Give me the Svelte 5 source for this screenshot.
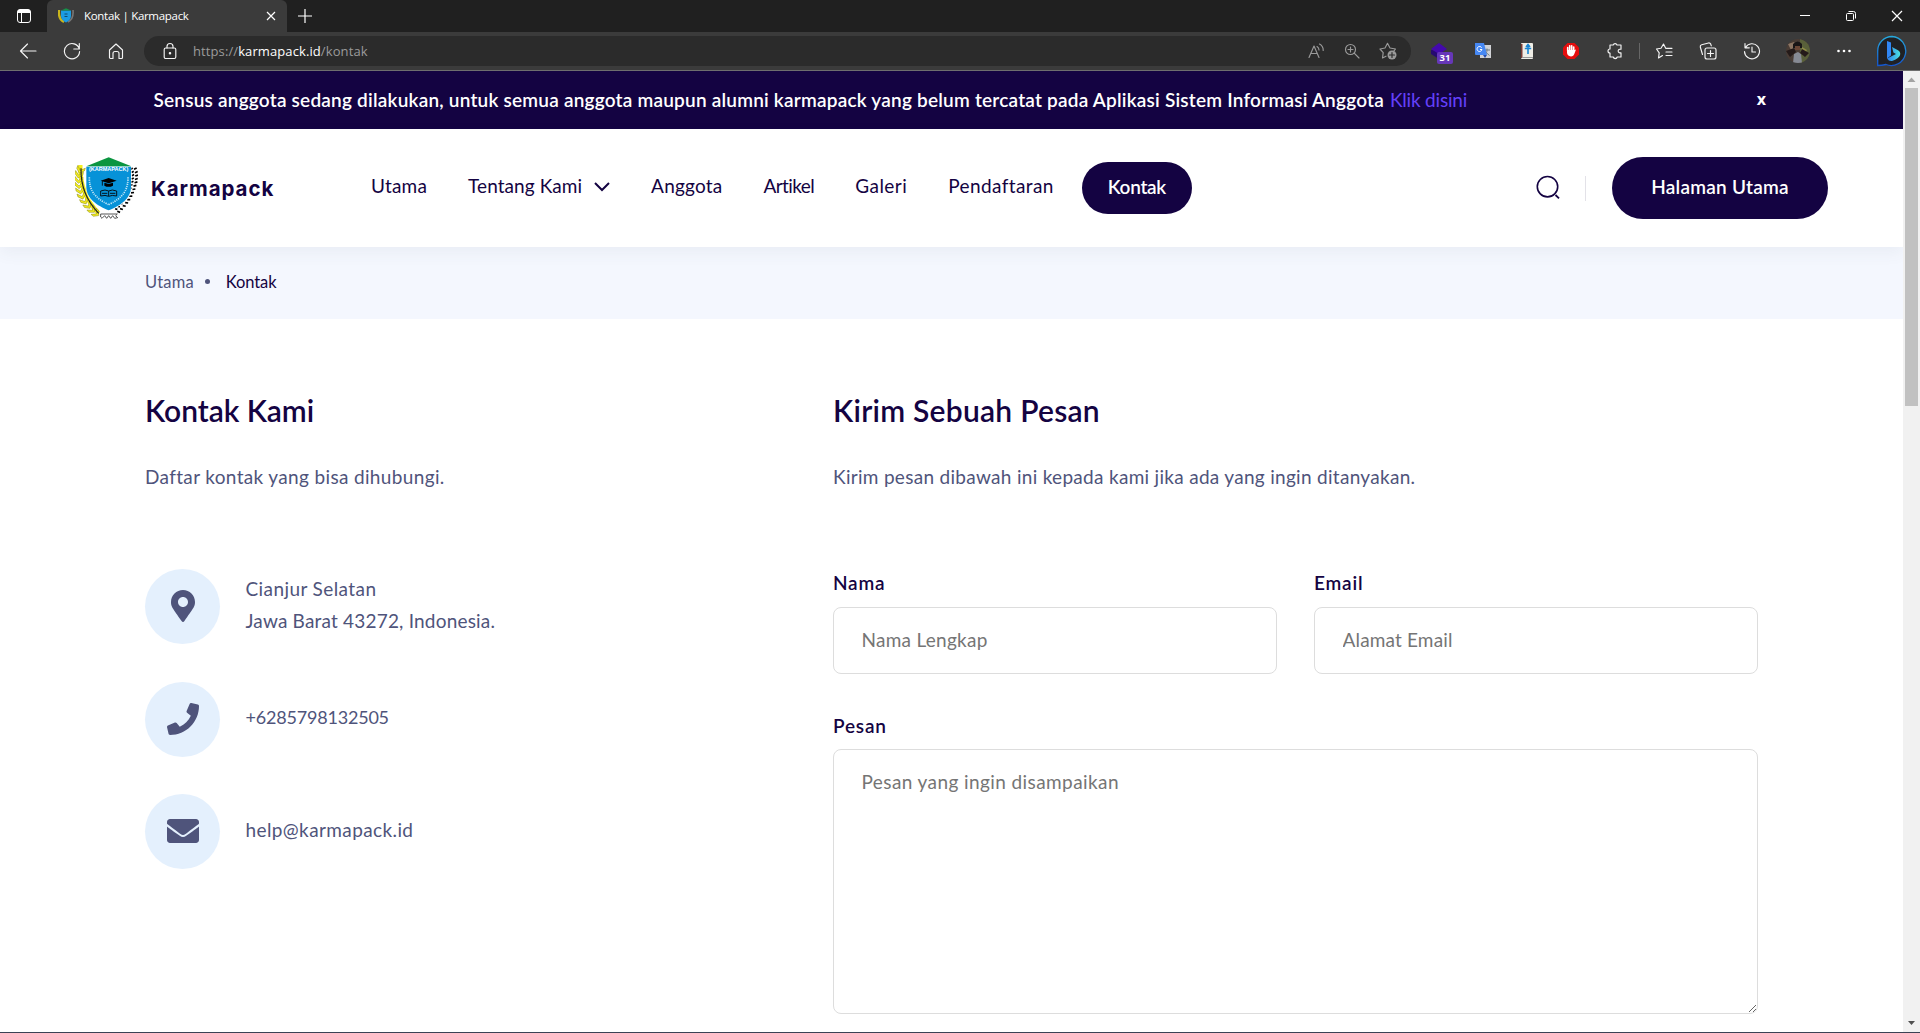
<script>
  const nav = [
    { label: 'Utama', ls: 0.2 },
    { label: 'Tentang Kami', ls: 0.07, menu: true },
    { label: 'Anggota', ls: 0.2 },
    { label: 'Artikel', ls: -0.55 },
    { label: 'Galeri', ls: 0.45 },
    { label: 'Pendaftaran', ls: 0.4 }
  ];
  const leftWheat = [
    [38, 58, 20], [33, 72, 12], [32, 88, 5], [33, 104, -2], [36, 120, -10], [41, 136, -18], [49, 151, -26], [59, 165, -34], [71, 178, -42], [83, 189, -50]
  ];
  const rightDots = [
    [196, 56, 0], [199, 66, 4], [200, 76, 6], [199, 86, 8], [198, 96, 10], [195, 106, 13], [192, 116, 16], [188, 126, 20], [183, 136, 25], [177, 146, 29], [171, 155, 34], [164, 164, 38], [156, 173, 43], [148, 181, 48]
  ];
</script>

<div class="window">
  <div class="titlebar">
    <div class="tab-actions">
      <svg width="16" height="16" viewBox="0 0 16 16"><rect x="1.5" y="1.5" width="13" height="13" rx="2.5" fill="none" stroke="#fff" /><path d="M1.5 5V4a2.5 2.5 0 0 1 2.500-2.500h8A2.500 2.500 0 0 1 14.500 4v1z" fill="#fff" /><path d="M5.500 5v9.500" stroke="#fff" /></svg>
    </div>
    <div class="tab">
      <svg class="favicon" width="16" height="16" viewBox="0 0 16 16"><path d="M1 2c-.5 5 1 10 5 12" fill="none" stroke="#c9b51c" stroke-width="2.400" /><path d="M15 2c.5 5-1 10-5 12" fill="none" stroke="#777" stroke-width="1.600" /><path d="M3 2.500h10V8c0 3-2 5-5 6.500C5 13 3 11 3 8z" fill="#1b9ce3" /><path d="M3 2.500 8 .2l5 2.300z" fill="#16924a" /><path d="M6.500 6h3M6.500 8.500h3" stroke="#124a6e" stroke-width="1.200" /></svg>
      <span class="tab-title">Kontak | Karmapack</span>
      <svg width="10" height="10" viewBox="0 0 10 10"><path d="M1 1l8 8M9 1 1 9" stroke="#fff" stroke-width="1.200" /></svg>
    </div>
    <svg class="plus" width="14" height="14" viewBox="0 0 14 14"><path d="M7 0v14M0 7h14" stroke="#fff" stroke-width="1.200" /></svg>
    <div class="controls">
      <span><svg width="10" height="10" viewBox="0 0 10 10"><path d="M0 5.500h10" stroke="#fff" /></svg></span>
      <span><svg width="12" height="12" viewBox="0 0 12 12" fill="none" stroke="#fff"><rect x="1.500" y="3.500" width="7" height="7" rx="1" /><path d="M3.500 1.500h5a2 2 0 0 1 2 2v5" /></svg></span>
      <span><svg width="12" height="12" viewBox="0 0 12 12"><path d="M1 1l10 10M11 1 1 11" stroke="#fff" stroke-width="1.200" /></svg></span>
    </div>
  </div>

  <div class="toolbar">
    <span class="cell"><svg width="18" height="18" viewBox="0 0 18 18" class="line"><path d="M17 9H1.500M8.500 2 1.500 9l7 7" /></svg></span>
    <span class="cell"><svg width="18" height="18" viewBox="0 0 18 18" class="line"><path d="M16.300 7A7.600 7.600 0 1 0 16.600 9.500M16.300 1.500V7h-5.500" /></svg></span>
    <span class="cell"><svg width="16" height="18" viewBox="0 0 16 18" class="line"><path d="M1.500 8 8 2l6.500 6v7.500a1 1 0 0 1-1 1h-2.500v-5a2 2 0 0 0-2-2H7a2 2 0 0 0-2 2v5H2.500a1 1 0 0 1-1-1z" /></svg></span>
    <div class="address">
      <svg width="14" height="18" viewBox="0 0 14 18" class="line"><rect x="1.200" y="6" width="11.600" height="10.500" rx="1.500" /><path d="M4 6V4.500a3 3 0 0 1 6 0V6" /><circle cx="7" cy="11.200" r=".7" fill="#fff" /></svg>
      <span class="url">https://<b>karmapack.id</b>/kontak</span>
      <span class="icon36"><svg width="17" height="16" viewBox="0 0 17 16" class="line dim"><path d="M1 14.500 6 3l5 11.500M2.700 10.500h6.500M9 3.500a4 4 0 0 1 2 3.500M11.500 1a7 7 0 0 1 3.700 6.500" /></svg></span>
      <span class="icon36"><svg width="16" height="16" viewBox="0 0 16 16" class="line dim"><circle cx="6.500" cy="6.500" r="5" /><path d="M10.200 10.200 15 15M4 6.500h5M6.500 4v5" /></svg></span>
      <span class="icon36"><svg width="18" height="18" viewBox="0 0 18 18" class="line dim"><path d="M7 14.200 3.500 16l.7-5.300L1 7l5-1 2.500-4.700L11 6l5.500 1-1.500 1.800" /><circle cx="13" cy="13" r="4.500" fill="#9a9a9a" stroke="none" /><path d="M13 10.500v5M10.500 13h5" stroke="#2b2b2b" /></svg></span>
    </div>
    <span class="cell stack">
      <svg width="18" height="18" viewBox="0 0 18 18"><path d="M1 8v4l8 5 4-3V9z" fill="#260a70" /><path d="M1 7 9 1l8 6-8 5z" fill="#4409ad" /></svg>
      <span class="badge">31</span>
    </span>
    <span class="cell"><svg width="18" height="18" viewBox="0 0 18 18"><rect x="6" y="3" width="11" height="13" fill="#d0d2d6" /><path d="M10 8h6M13 6.500V8c0 2-1 4-3 5M11.500 10l4 3.500" stroke="#6d7c86" fill="none" /><path d="M1 1h9l3 12H2a1 1 0 0 1-1-1z" fill="#4688f4" /><path d="m9 13 4 0-2 3z" fill="#274dab" /><path d="M7.700 5.700A2.500 2.500 0 1 0 8 7.500H6" stroke="#fff" fill="none" /></svg></span>
    <span class="cell"><svg width="14" height="18" viewBox="0 0 14 18"><rect x="1" y="1" width="12" height="16" rx="1" fill="#efede6" /><path d="M1 2v14h1.500V2z" fill="#7b3c35" /><path d="M2 15.500h11" stroke="#999" /><path d="M8 12V4M4.800 6.500h6.400M6 5l2-2.500L10 5" stroke="#1684d4" stroke-width="1.600" fill="none" /></svg></span>
    <span class="cell"><svg width="18" height="18" viewBox="0 0 18 18"><path d="M5.500 1h7L17 5.500v7L12.500 17h-7L1 12.500v-7z" fill="#e40d0d" /><path d="M5.700 9V5.500M7.700 8V3.800M9.700 8V3.800M11.700 9V5" stroke="#fff" stroke-width="1.600" stroke-linecap="round" /><path d="M5 8h7.500l1.500-.6-1.500 4c-.6 2-1.800 3-3.500 3C6.500 14.400 5 12.500 5 10.500z" fill="#fff" /></svg></span>
    <span class="cell"><svg width="18" height="18" viewBox="0 0 18 18" class="line"><path d="M4 3h3.200a2 2 0 0 1 3.800 0h4v4.200h-1.400a1.900 1.900 0 0 0 0 3.700H15V15h-3.800a2 2 0 0 1-3.900 0H4v-4a2 2 0 0 1 0-4z" /></svg></span>
    <span class="sep"></span>
    <span class="cell"><svg width="18" height="18" viewBox="0 0 18 18" class="line"><path d="M7.500 13.500 3.500 16l.7-5.200L1.500 7l4.500-.7L8.500 2l2.200 4.300H17M11 10h6M11 13.500h6" /></svg></span>
    <span class="cell"><svg width="18" height="18" viewBox="0 0 18 18" class="line"><rect x="6" y="6" width="11" height="11" rx="2" /><path d="M11.500 8.500v6M8.500 11.500h6M3.500 12.500 1.300 5A2 2 0 0 1 2.700 2.700L9.500 1a2 2 0 0 1 2.400 1.500l.4 1.300" /></svg></span>
    <span class="cell"><svg width="18" height="18" viewBox="0 0 18 18" class="line"><path d="M2.500 5.500A7.500 7.500 0 1 1 1.500 9.500M2 1.500v4.300h4.300M9 5v5h3.500" /></svg></span>
    <span class="cell wide"><svg width="24" height="24" viewBox="0 0 24 24"><clipPath id="av"><circle cx="12" cy="12" r="12" /></clipPath><g clip-path="url(#av)"><path d="M0 0h24v24H0z" fill="#493c35" /><path d="M14 0h10v24H14z" fill="#59603a" /><path d="M2 5l6-2 3 5-6 3z" fill="#8c7563" /><path d="M16 8l5 3-3 6-3-4z" fill="#8e8c47" /><path d="M7 5q5-5 9 0v4H7z" fill="#191516" /><path d="M9 7h5v4H9z" fill="#6a4636" /><path d="M7 24l1-9 4-2 3 2 1 9z" fill="#868a94" /><path d="M0 12l8-3 2 4-6 5zM23 14l-7-4-2 4 5 4z" fill="#241a19" /></g></svg></span>
    <span class="cell"><svg width="16" height="4" viewBox="0 0 16 4" fill="#fff"><circle cx="2.500" cy="2" r="1.300" /><circle cx="8" cy="2" r="1.300" /><circle cx="13.500" cy="2" r="1.300" /></svg></span>
    <span class="cell bing"><svg width="32" height="32" viewBox="0 0 32 32"><defs><linearGradient id="bg" x1="0" y1="0" x2="0" y2="1"><stop offset="0" stop-color="#26a8dc" /><stop offset="1" stop-color="#1456cf" /></linearGradient><linearGradient id="bb" x1="0" y1="0" x2="1" y2="0"><stop offset="0" stop-color="#2d7df0" /><stop offset="1" stop-color="#4be3e0" /></linearGradient></defs><path d="M16 1.500A14.500 14.500 0 1 1 10 29.500Q6 30.500 1.700 30.500V16A14.500 14.500 0 0 1 16 1.500z" fill="#202124" stroke="url(#bg)" stroke-width="1.300" /><path d="m11 6 4 1.500v13L11 23.500z" fill="#3087f5" /><path d="M16 12l6 3.200q3 1.800 2 5Q23 23.500 16 26q-3 .5-5-2.500l9-4.500-2.600-1.500z" fill="url(#bb)" /></svg></span>
  </div>

  <div class="viewport">
    <div class="page">
      <div class="banner">
        <p>Sensus anggota sedang dilakukan, untuk semua anggota maupun alumni karmapack yang belum tercatat pada Aplikasi Sistem Informasi Anggota</p>
        <a href="#sensus">Klik disini</a>
        <span class="dismiss">x</span>
      </div>

      <header>
        <svg class="logo" width="63" height="62" viewBox="21 21 189 186">
          <path d="M37 45C36 85 42 140 92 190" fill="none" stroke="#f4ee1c" stroke-width="13" />
          {#each leftWheat as [x, y, r]}
            <g transform="translate({x} {y}) rotate({r})"><path d="M0 4-12-8v9L0 12 12 1v-9z" fill="#f4ee1c" stroke="#8d8b1a" stroke-width="1.500" /></g>
          {/each}
          <path d="M39 55C38 100 48 145 92 190" fill="none" stroke="#222" stroke-width="3.500" />
          {#each rightDots as [x, y, r]}
            <g transform="translate({x} {y}) rotate({r})"><path d="M-8 2-2-2M2 2l8-4" stroke="#000" stroke-width="5" /></g>
          {/each}
          <path d="M54 50h136v62c0 36-30 56-68 72-38-16-68-36-68-72z" fill="#fff" />
          <path d="M55 50h134v60c0 36-32 56-67 71-35-15-67-35-67-71z" fill="#0792d8" />
          <path d="M55 49 122 22l68 27z" fill="#0b9540" />
          <text x="122" y="64" text-anchor="middle" textLength="118" lengthAdjust="spacingAndGlyphs" class="logo-text">(KARMAPACK)</text>
          <path d="M64 82c0 36 12 60 58 82M180 82c0 36-12 60-58 82" fill="none" stroke="#c4e6f7" stroke-width="5" stroke-dasharray="3 3 4 3" />
          <path d="M98 92 122 84l24 8-24 8zM109 98v9q13 7 26 0v-9l-13 4z" /><path d="M103 93v14" stroke="#000" stroke-width="2.500" />
          <path d="M98 138v-15q14-6 24 0 10-6 24 0v15q-14-4-24 1-10-5-24-1zM122 123v15M102 130h16M126 130h16" fill="none" stroke="#03151f" stroke-width="3" />
          <path d="M98 192h50l-5 5 6 6-9 2-6-8-6 8-6-8-6 8-6-8-8 8-4-4z" fill="none" stroke="#333" stroke-width="2.500" />
        </svg>
        <span class="brand">Karmapack</span>
        <nav>
          {#each nav as item}
            <a href="#{item.label}" style:letter-spacing="{item.ls}px">{item.label}{#if item.menu}<svg width="16" height="10" viewBox="0 0 16 10"><path d="m1 1 7 7 7-7" fill="none" stroke="#140342" stroke-width="2" /></svg>{/if}</a>
          {/each}
          <a class="current" href="#kontak">Kontak</a>
        </nav>
        <svg class="search" width="24" height="24" viewBox="0 0 24 24" fill="none" stroke="#140342"><circle cx="11.500" cy="11.700" r="10.200" stroke-width="1.600" /><path d="m19.500 20 3.500 3.300" stroke-width="1.800" /></svg>
        <span class="rule"></span>
        <a class="cta" href="#utama">Halaman Utama</a>
      </header>

      <div class="crumbs"><span>Utama</span><i></i><span class="here">Kontak</span></div>

      <main>
        <section class="info">
          <h2>Kontak Kami</h2>
          <p class="lead">Daftar kontak yang bisa dihubungi.</p>
          <ul>
            <li>
              <span class="disc"><svg width="24" height="32" viewBox="0 0 384 512"><path d="M172.300 501.700C27 291 0 269.400 0 192 0 86 86 0 192 0s192 86 192 192c0 77.400-27 99-172.300 309.700-9.500 13.800-29.900 13.800-39.400 0zM192 272c44.200 0 80-35.800 80-80s-35.800-80-80-80-80 35.800-80 80 35.800 80 80 80z" /></svg></span>
              <div><span class="place">Cianjur Selatan</span><span class="city">Jawa Barat 43272, Indonesia.</span></div>
            </li>
            <li>
              <span class="disc"><svg width="32" height="32" viewBox="0 0 512 512"><path d="M493.400 24.600l-104-24c-11.300-2.600-22.900 3.300-27.500 13.900l-48 112c-4.200 9.800-1.400 21.300 6.900 28l60.600 49.600c-36 76.700-98.900 140.500-177.200 177.200l-49.600-60.600c-6.800-8.300-18.200-11.100-28-6.900l-112 48C3.900 366.500-2 378.100.6 389.400l24 104C27.100 504.200 36.700 512 48 512c256.100 0 464-207.500 464-464 0-11.200-7.700-20.900-18.600-23.400z" /></svg></span>
              <div><span class="phone">+6285798132505</span></div>
            </li>
            <li>
              <span class="disc"><svg width="32" height="32" viewBox="0 0 512 512"><path d="M502.300 190.800c3.900-3.100 9.700-.2 9.700 4.700V400c0 26.500-21.500 48-48 48H48c-26.500 0-48-21.500-48-48V195.600c0-5 5.700-7.800 9.700-4.700 22.400 17.400 52.100 39.500 154.100 113.600 21.100 15.400 56.700 47.800 92.200 47.600 35.700.3 72-32.800 92.300-47.600 102-74.100 131.600-96.300 154-113.700zM256 320c23.200.4 56.600-29.200 73.400-41.400 132.700-96.300 142.800-104.700 173.400-128.700 5.800-4.500 9.200-11.500 9.200-18.900v-19c0-26.500-21.500-48-48-48H48c-26.500 0-48 21.500-48 48v19c0 7.400 3.400 14.300 9.200 18.900 30.600 23.900 40.700 32.400 173.400 128.700 16.800 12.200 50.200 41.800 73.400 41.400z" /></svg></span>
              <div><span class="mail">help@karmapack.id</span></div>
            </li>
          </ul>
        </section>

        <section class="form">
          <h2>Kirim Sebuah Pesan</h2>
          <p class="lead">Kirim pesan dibawah ini kepada kami jika ada yang ingin ditanyakan.</p>
          <div class="fields">
            <label>Nama<input placeholder="Nama Lengkap" /></label>
            <label>Email<input class="email" placeholder="Alamat Email" /></label>
            <label class="full">Pesan<textarea placeholder="Pesan yang ingin disampaikan"></textarea></label>
          </div>
        </section>
      </main>
    </div>

    <div class="scrollbar">
      <svg width="17" height="17" viewBox="0 0 17 17"><path d="m4.500 11 4-4.500 4 4.500z" fill="#a3a3a3" /></svg>
      <span class="thumb"></span>
      <svg class="down" width="17" height="17" viewBox="0 0 17 17"><path d="m5 6 3.500 4L12 6z" fill="#505050" /></svg>
    </div>
  </div>
</div>

<style>
  :global(body) { background: #fff; overflow: hidden; }
  * { box-sizing: border-box; }
  svg { display: block; flex: none; }
  a { text-decoration: none; color: inherit; }
  p, h2, ul { margin: 0; padding: 0; }

  .window { display: flex; flex-direction: column; width: 1920px; height: 1033px; overflow: hidden; border-bottom: 1px solid #3a4254; font-family: Lato, "Liberation Sans", sans-serif; }

  .titlebar { display: flex; align-items: center; height: 32px; flex: none; background: #202020; font-family: "Open Sans", sans-serif; }
  .tab-actions { width: 47px; display: flex; justify-content: center; }
  .tab { display: flex; align-items: center; width: 240px; height: 32px; padding: 0 11px 0 11px; background: #3b3b3b; border-radius: 6px 6px 0 0; color: #fff; }
  .tab-title { flex: 1; margin-left: 10px; padding-bottom: 1px; font-size: 11.500px; letter-spacing: -.3px; white-space: nowrap; }
  .plus { margin-left: 11px; }
  .controls { display: flex; margin-left: auto; }
  .controls span { width: 46px; display: flex; justify-content: center; }

  .toolbar { display: flex; align-items: center; height: 39px; flex: none; padding: 0 0 0 6px; background: #3b3b3b; border-bottom: 1px solid #6e6e6e; font-family: "Open Sans", sans-serif; }
  .cell { width: 44px; flex: none; display: flex; justify-content: center; }
  .cell.wide { width: 48px; }
  .cell.bing { width: 52px; }
  .line { fill: none; stroke: #f4f4f4; stroke-width: 1.150; stroke-linejoin: round; stroke-linecap: round; }
  .line.dim { stroke: #9a9a9a; }
  .address { display: flex; align-items: center; width: 1267px; height: 30px; margin: 0 6px; padding: 0 5px 0 19px; border-radius: 15px; background: #2b2b2b; }
  .url { flex: 1; margin-left: 16px; font-size: 13px; letter-spacing: .1px; color: #9b9b9b; }
  .url b { font-weight: 400; color: #fff; }
  .icon36 { width: 36px; display: flex; justify-content: center; }
  .stack { position: relative; }
  .badge { position: absolute; left: 20px; top: 10px; width: 16px; height: 12px; border-radius: 2px; background: #6637b8; color: #fff; font-size: 9.500px; line-height: 12px; font-weight: 700; text-align: center; }
  .sep { width: 1px; height: 16px; margin: 0 2px; background: #666; }

  .viewport { display: flex; flex: 1; min-height: 0; }
  .page { width: 1903px; overflow: hidden; background: #fff; }

  .banner { display: flex; align-items: center; height: 58px; padding: 0 137px 2px 153.500px; background: #140342; color: #fff; font-size: 19px; white-space: nowrap; }
  .banner p { font-weight: 600; letter-spacing: .213px; }
  .banner a { margin-left: 6px; color: #6440fb; letter-spacing: -.2px; }
  .dismiss { margin-left: auto; font: 700 16px "Open Sans", sans-serif; }

  header { position: relative; display: flex; align-items: center; height: 118px; padding: 0 75px; background: #fff; color: #140342; box-shadow: 0 6px 15px rgba(64, 79, 104, .06); white-space: nowrap; }
  .logo-text { font: 700 15px "Liberation Sans", sans-serif; fill: #fff; }
  .brand { width: 220px; margin-left: 13px; padding-top: 1px; font: 700 20.500px Inter, sans-serif; letter-spacing: .95px; }
  nav { display: flex; align-items: center; gap: 41px; font-size: 19px; }
  nav a { display: flex; align-items: center; padding-bottom: 6px; }
  nav svg { margin-left: 12px; margin-top: 4px; }
  nav .current { justify-content: center; width: 110px; height: 52px; margin-left: -13px; padding-bottom: 4px; border-radius: 26px; background: #140342; color: #fff; font-weight: 600; letter-spacing: -.3px; }
  .search { margin-left: auto; margin-bottom: 2px; }
  .rule { width: 1px; height: 25px; margin: 0 26px 0 25px; background: #e3e2e8; }
  .cta { display: flex; align-items: center; justify-content: center; width: 216px; height: 62px; padding-bottom: 3px; border-radius: 31px; background: #140342; color: #fff; font-size: 19px; font-weight: 600; letter-spacing: .25px; }

  .crumbs { display: flex; align-items: center; height: 72px; padding: 0 145px 3px; background: #f4f7fe; color: #4f547b; font-size: 16.500px; letter-spacing: .2px; }
  .crumbs i { width: 5px; height: 5px; margin: 0 16px 0 11px; border-radius: 50%; background: #4f547b; }
  .crumbs .here { color: #140342; letter-spacing: -.1px; }

  main { display: grid; grid-template-columns: 688px 925px; padding: 71px 145px 0; color: #4f547b; font-size: 19px; line-height: 32px; }
  h2 { color: #140342; font-size: 30px; line-height: 41px; height: 40px; font-weight: 600; letter-spacing: -.05px; }
  .form h2 { letter-spacing: .25px; }
  .lead { margin-top: 31px; letter-spacing: .3px; }
  .info .lead { letter-spacing: .35px; }
  ul { display: grid; gap: 37.500px; margin-top: 76px; list-style: none; }
  li { display: flex; align-items: center; height: 75px; }
  .disc { display: flex; align-items: center; justify-content: center; width: 75px; height: 75px; margin-right: 25.500px; padding-bottom: 1px; border-radius: 50%; background: #e4f0fd; fill: #4f547b; }
  li div { display: flex; flex-direction: column; padding-bottom: 4px; }
  .place { letter-spacing: .41px; }
  .city { letter-spacing: .19px; }
  .phone { font-size: 18px; letter-spacing: -.2px; }
  .mail { letter-spacing: .39px; }

  .fields { display: grid; grid-template-columns: 1fr 1fr; gap: 36px 37px; margin-top: 74px; }
  label { display: flex; flex-direction: column; gap: 8px; color: #140342; font-weight: 600; letter-spacing: .8px; }
  .full { grid-column: 1 / 3; gap: 7px; }
  input, textarea { display: block; width: 100%; margin: 0; padding: 0 27.500px; border: 1px solid #ddd; border-radius: 8px; background: #fff; outline: 0; font: 400 19px/32px Lato, sans-serif; letter-spacing: .27px; }
  input { height: 67px; padding-bottom: 3px; }
  .email { letter-spacing: .16px; }
  textarea { height: 265px; padding-top: 16px; letter-spacing: .41px; resize: both; }
  input::placeholder, textarea::placeholder { color: #757575; opacity: 1; }

  .scrollbar { display: flex; flex-direction: column; width: 17px; background: #f1f1f1; }
  .thumb { width: 13px; height: 318px; margin-left: 2px; background: #c1c1c1; }
  .down { margin-top: auto; }
</style>
